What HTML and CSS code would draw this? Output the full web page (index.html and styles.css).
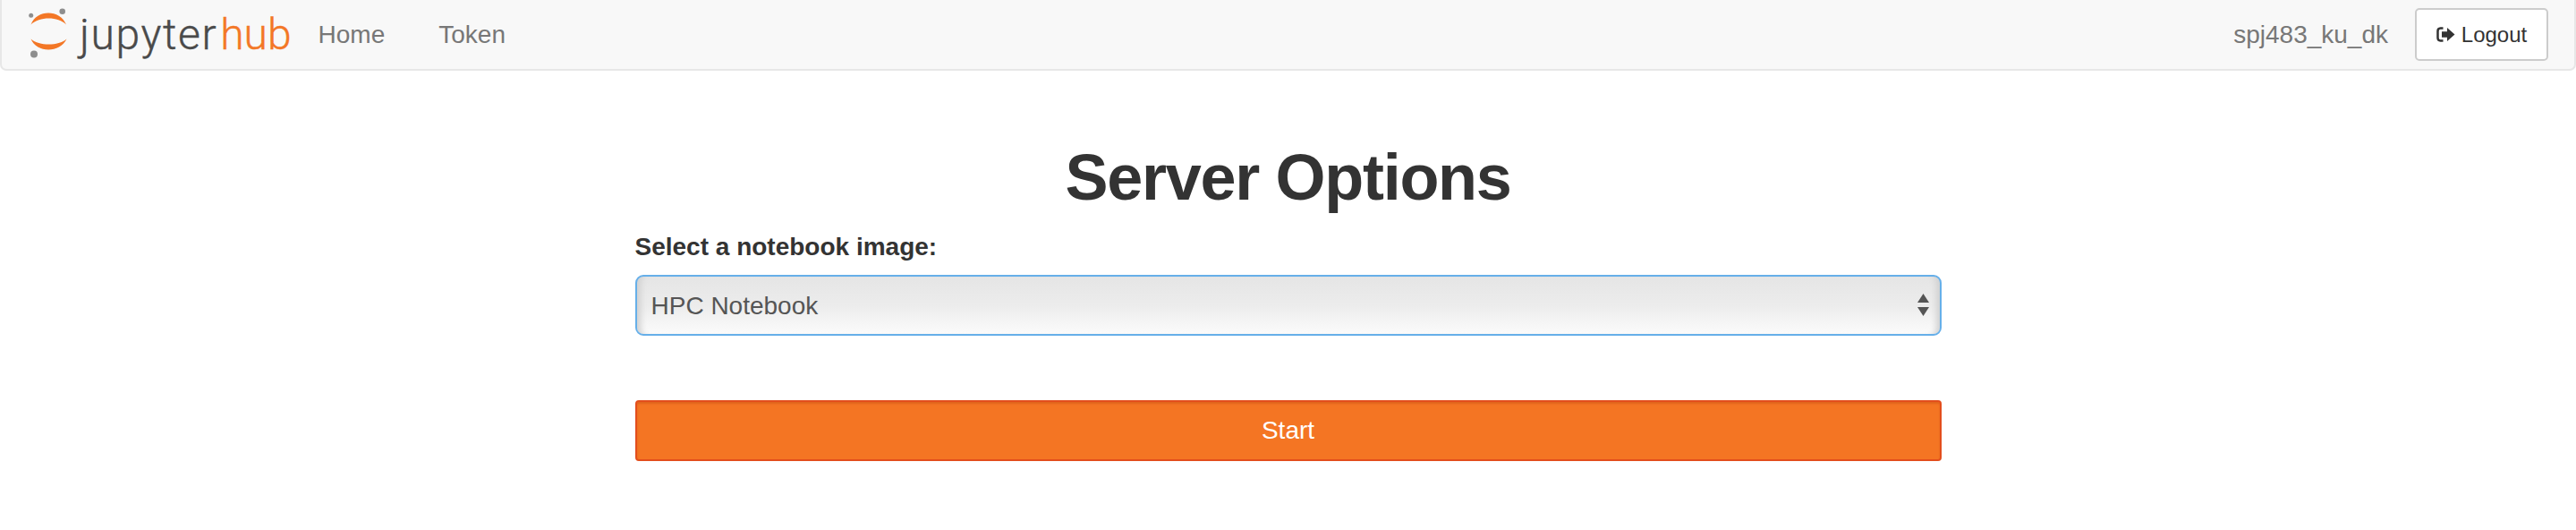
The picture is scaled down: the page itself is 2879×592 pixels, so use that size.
FILE: index.html
```html
<!DOCTYPE html>
<html lang="en">
<head>
<meta charset="utf-8">
<title>JupyterHub</title>
<link rel="stylesheet" href="styles.css">
</head>
<body>
<nav class="navbar">
  <a class="brand" href="#">
    <svg class="brand-mark" width="42" height="62" viewBox="0 -3 42 62" aria-hidden="true">
      <path class="arc" d="M0.500 16.500C7 -0.800 33 -0.800 40 16.500C31 7.200 10 7.200 0.500 16.500Z"/>
      <path class="arc" d="M0.500 32.500C10 40.500 31 40.500 40.500 32.500C33 48.500 7 48.500 0.500 32.500Z"/>
      <circle class="dot" cx="35.700" cy="1.800" r="3.300"/>
      <circle class="dot" cx="0.700" cy="6.200" r="2.500"/>
      <circle class="dot" cx="4" cy="49.500" r="4"/>
    </svg>
    <span class="brand-text">jupyter<span class="brand-hub">hub</span></span>
  </a>
  <ul class="nav-links">
    <li><a href="#">Home</a></li>
    <li><a href="#">Token</a></li>
  </ul>
  <div class="nav-user">
    <span class="username">spj483_ku_dk</span>
    <a class="logout" href="#">
      <svg class="logout-icon" width="21" height="17" viewBox="0 0 21 17" aria-hidden="true">
        <path class="logout-door" d="M7.500 1.500H4.500A3.200 3.200 0 0 0 1.500 4.700V12.300A3.200 3.200 0 0 0 4.500 15.500H7.500"/>
        <path class="logout-arrow" d="M12 1L20.500 8.500L12 16V11.700H6V5.300H12Z"/>
      </svg>
      Logout
    </a>
  </div>
</nav>
<main class="content">
  <h1 class="title">Server Options</h1>
  <form class="spawn-form">
    <label class="field-label" for="image">Select a notebook image:</label>
    <div class="select-wrap">
      <select class="select" id="image">
        <option>HPC Notebook</option>
      </select>
      <svg class="select-arrows" width="13" height="25" viewBox="0 0 13 25" aria-hidden="true">
        <path d="M6.500 0L13 10H0Z"/>
        <path d="M0 15H13L6.500 25Z"/>
      </svg>
    </div>
    <button class="start" type="button">Start</button>
  </form>
</main>
</body>
</html>
```
FILE: styles.css
```css
* { box-sizing: border-box; }
html, body { margin: 0; padding: 0; }
body {
  font-family: "Liberation Sans", Arial, sans-serif;
  font-size: 28px;
  color: #333;
  background: #fff;
}
a { text-decoration: none; }

.navbar {
  display: flex;
  align-items: center;
  height: 79px;
  background: #f8f8f8;
  border: 2px solid #e7e7e7;
  border-top: 0;
  border-radius: 0 0 7px 7px;
  padding: 0 29px 0 32px;
}
.brand { display: flex; align-items: center; }
.brand-mark { display: block; margin-right: 13px; overflow: visible; }
.arc { fill: #f37726; }
.dot { fill: #8e8e8e; }
.brand-text {
  font-family: Roboto, Lato, sans-serif;
  font-weight: 300;
  font-size: 48px;
  line-height: 66px;
  letter-spacing: 1.600px;
  color: #4a4a4a;
  -webkit-text-stroke: 0.400px currentColor;
}
.brand-hub { color: #f37726; letter-spacing: 0; margin-left: 3px; }

.nav-links {
  display: flex;
  gap: 60px;
  list-style: none;
  margin: 0 0 0 30px;
  padding: 0;
}
.nav-links a { color: #777; }

.nav-user {
  margin-left: auto;
  display: flex;
  align-items: center;
  gap: 30px;
}
.username { color: #777; }
.logout {
  display: flex;
  align-items: center;
  justify-content: center;
  gap: 7px;
  width: 149px;
  height: 59px;
  background: #fff;
  border: 2px solid #ccc;
  border-radius: 5px;
  color: #333;
  font-size: 24px;
}
.logout-door { fill: none; stroke: #333; stroke-width: 2.500; }
.logout-arrow { fill: #333; }

.content {
  width: 1460px;
  margin: 0 auto;
}
.title {
  margin: 76px 0 0;
  font-size: 72px;
  line-height: 86px;
  font-weight: 700;
  letter-spacing: -1.300px;
  text-align: center;
  color: #333;
}
.spawn-form { display: flex; flex-direction: column; }
.field-label {
  margin-top: 18px;
  font-weight: 700;
  line-height: 34px;
}
.select-wrap {
  position: relative;
  margin-top: 14px;
  height: 68px;
}
.select {
  display: block;
  width: 100%;
  height: 100%;
  appearance: none;
  -webkit-appearance: none;
  padding: 0 16px;
  font: inherit;
  color: #555;
  border: 2px solid #66afe9;
  border-radius: 9px;
  outline: 0;
  background: linear-gradient(#e5e5e5 0%, #ececec 50%, #fbfbfb 100%);
  box-shadow: inset 10px 0 7px -6px #d0d0d0, inset -10px 0 7px -6px #d0d0d0;
}
.select-arrows {
  position: absolute;
  right: 14px;
  top: 21px;
  fill: #555;
}
.start {
  margin-top: 72px;
  height: 68px;
  background: #f47523;
  border: 2px solid #e34e1c;
  border-radius: 4px;
  box-shadow: inset 0 2px 2px rgba(200, 80, 20, .45);
  color: #fff;
  font: inherit;
}
```
